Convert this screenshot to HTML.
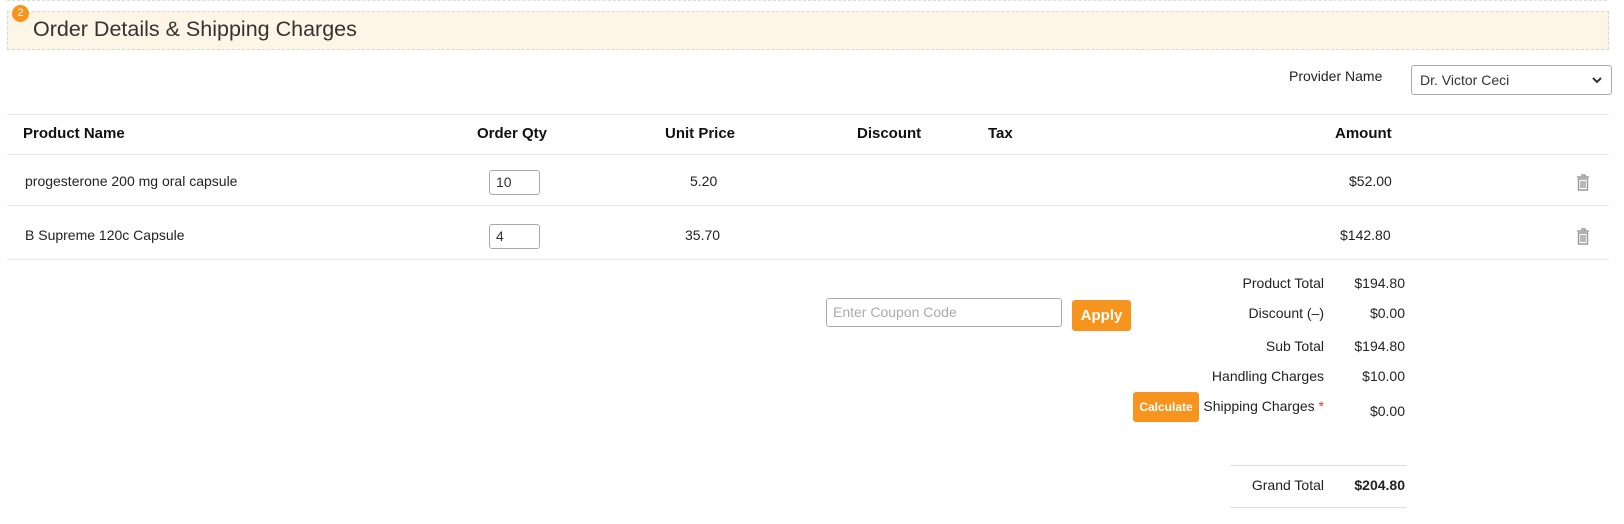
<!DOCTYPE html>
<html><head><style>
body{margin:0;width:1624px;height:524px;background:#fff;font-family:"Liberation Sans",sans-serif;color:#222;position:relative;overflow:hidden}
.a{position:absolute;white-space:nowrap}
.hdr{position:absolute;left:7px;top:11px;width:1600px;height:37px;background:#fdf5e6;border:1px dashed #d8d8d8}
.top{position:absolute;left:7px;top:0;width:1600px;border-top:1px dashed #ddd}
.badge{position:absolute;left:12px;top:5px;width:17px;height:17px;border-radius:50%;background:#f7941d;color:#fff;font-size:11px;text-align:center;line-height:17px}
.line{position:absolute;left:7px;width:1602px;height:1px;background:#e8e8e8}
.th{font-weight:bold;font-size:15px;color:#111}
.t{font-size:14px;color:#222}
.inp{position:absolute;border:1px solid #aaa;border-radius:3px;background:#fff;font-size:14px;box-sizing:border-box;padding-left:6px;color:#333}
.btn{position:absolute;background:#f7941d;color:#fff;border-radius:3px;text-align:center;font-weight:bold}
.r{text-align:right}
</style></head><body>
<div class="top"></div>
<div class="hdr"></div>
<div class="badge">2</div>
<div class="a" style="left:33px;top:17px;font-size:21.5px;color:#333">Order Details &amp; Shipping Charges</div>
<div class="a t" style="left:1289px;top:68px">Provider Name</div>
<div class="inp" style="left:1411px;top:65px;width:201px;height:30px;line-height:28px;padding-left:8px">Dr. Victor Ceci
<svg style="position:absolute;right:8px;top:10px" width="12" height="8" viewBox="0 0 12 8"><path d="M2 2l4 4 4-4" fill="none" stroke="#333" stroke-width="2"/></svg></div>
<div class="line" style="top:114px"></div>
<div class="a th" style="left:23px;top:125px">Product Name</div>
<div class="a th" style="left:477px;top:125px">Order Qty</div>
<div class="a th" style="left:665px;top:125px">Unit Price</div>
<div class="a th" style="left:857px;top:125px">Discount</div>
<div class="a th" style="left:988px;top:125px">Tax</div>
<div class="a th" style="left:1335px;top:125px">Amount</div>
<div class="line" style="top:154px"></div>
<div class="a t" style="left:25px;top:173px">progesterone 200 mg oral capsule</div>
<div class="inp" style="left:489px;top:170px;width:51px;height:25px;line-height:23px">10</div>
<div class="a t" style="left:690px;top:173px">5.20</div>
<div class="a t" style="left:1349px;top:173px">$52.00</div>
<div class="line" style="top:205px"></div>
<div class="a t" style="left:25px;top:227px">B Supreme 120c Capsule</div>
<div class="inp" style="left:489px;top:224px;width:51px;height:25px;line-height:23px">4</div>
<div class="a t" style="left:685px;top:227px">35.70</div>
<div class="a t" style="left:1340px;top:227px">$142.80</div>
<div class="line" style="top:259px"></div>
<svg class="a" style="left:1576px;top:174px" width="14" height="17" viewBox="0 0 14 17"><path d="M5 1h4v2M1 3h12M2.5 5h9v11h-9zM5 7v7M7 7v7M9 7v7" fill="none" stroke="#999" stroke-width="1.4"/></svg>
<svg class="a" style="left:1576px;top:228px" width="14" height="17" viewBox="0 0 14 17"><path d="M5 1h4v2M1 3h12M2.5 5h9v11h-9zM5 7v7M7 7v7M9 7v7" fill="none" stroke="#999" stroke-width="1.4"/></svg>
<div class="inp" style="left:826px;top:298px;width:236px;height:29px;line-height:27px;color:#aaa">Enter Coupon Code</div>
<div class="btn" style="left:1072px;top:300px;width:59px;height:31px;line-height:31px;font-size:15px">Apply</div>
<div class="btn" style="left:1133px;top:392px;width:66px;height:30px;line-height:30px;font-size:12px">Calculate</div>
<div class="a t r" style="right:300px;top:275px">Product Total</div>
<div class="a t r" style="right:219px;top:275px">$194.80</div>
<div class="a t r" style="right:300px;top:305px">Discount (–)</div>
<div class="a t r" style="right:219px;top:305px">$0.00</div>
<div class="a t r" style="right:300px;top:338px">Sub Total</div>
<div class="a t r" style="right:219px;top:338px">$194.80</div>
<div class="a t r" style="right:300px;top:368px">Handling Charges</div>
<div class="a t r" style="right:219px;top:368px">$10.00</div>
<div class="a t r" style="right:300px;top:398px">Shipping Charges <span style="color:#e33">*</span></div>
<div class="a t r" style="right:219px;top:403px">$0.00</div>
<div class="a" style="left:1230px;top:465px;width:176px;height:1px;background:#ddd"></div>
<div class="a t r" style="right:300px;top:477px">Grand Total</div>
<div class="a t r" style="right:219px;top:477px;font-weight:bold">$204.80</div>
<div class="a" style="left:1230px;top:507px;width:176px;height:1px;background:#ddd"></div>
</body></html>
